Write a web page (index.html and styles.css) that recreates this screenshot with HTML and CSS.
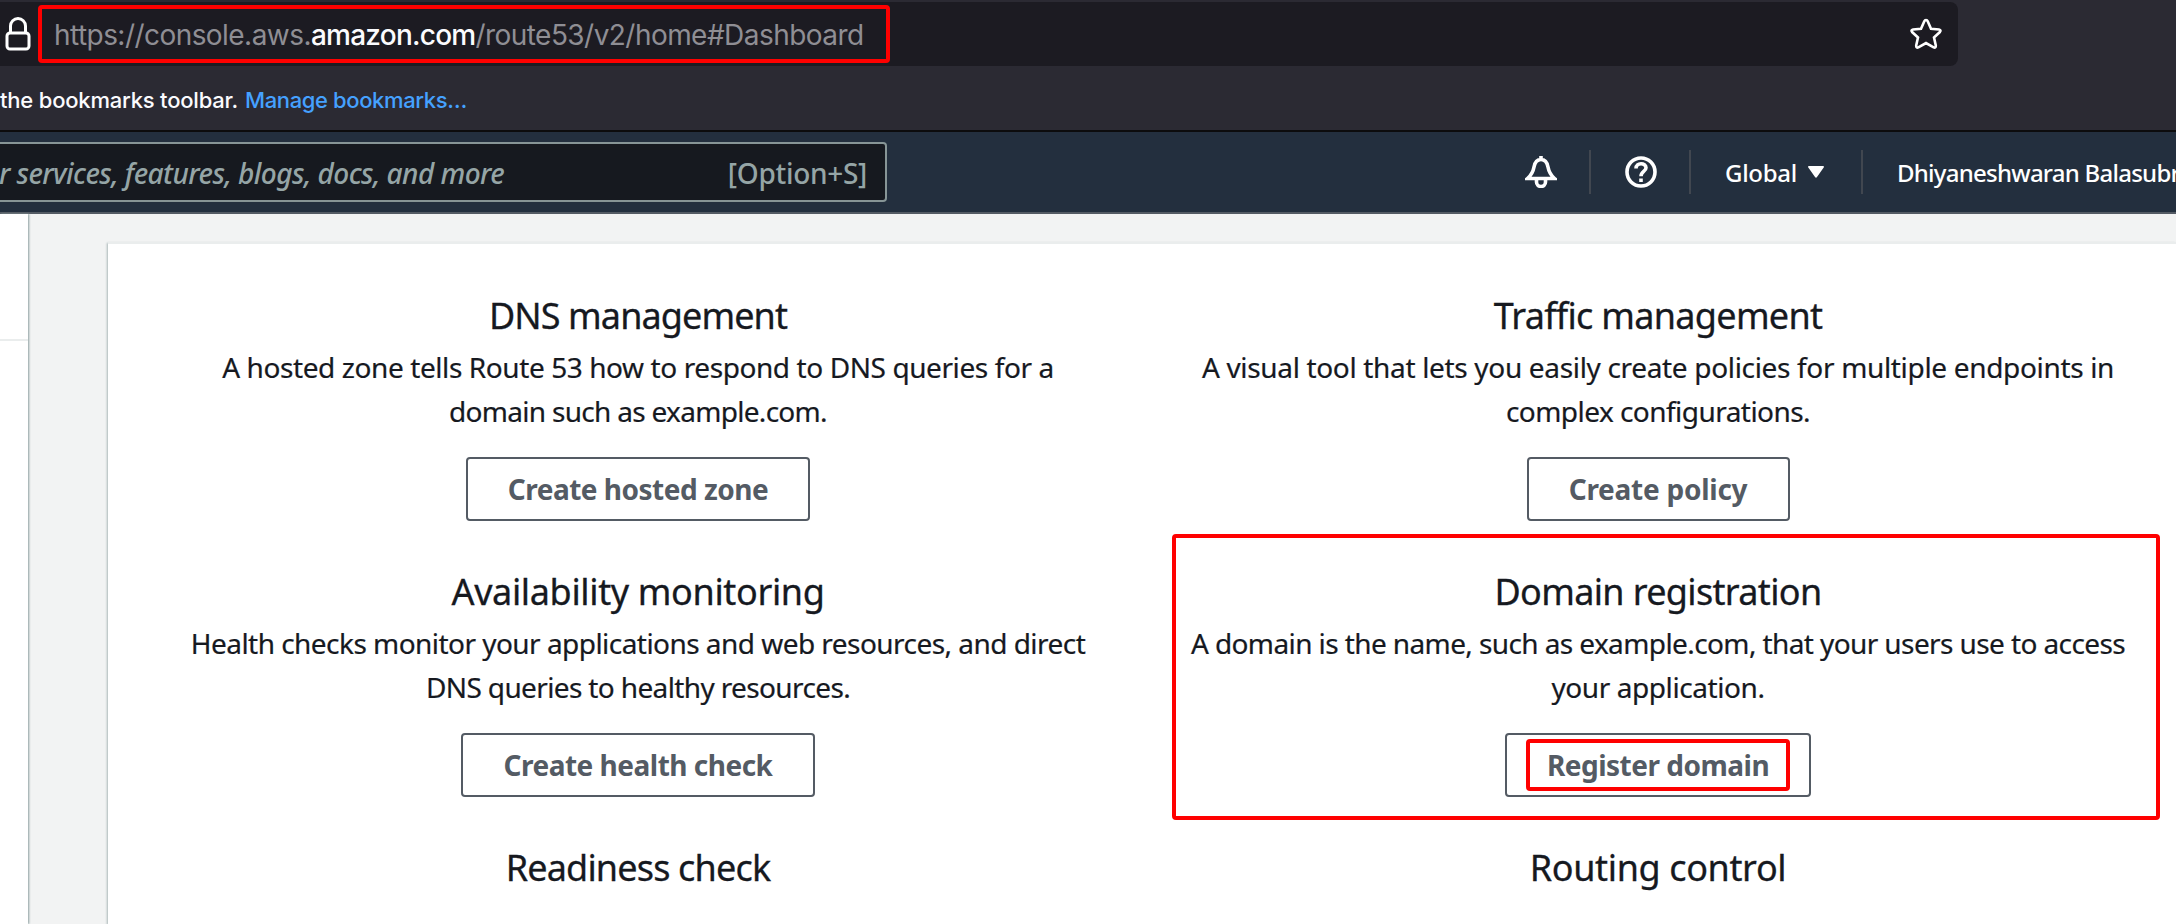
FILE: index.html
```html
<!DOCTYPE html>
<html lang="en">
<head>
<meta charset="utf-8">
<title>Route 53 Dashboard</title>
<link rel="stylesheet" href="styles.css">
</head>
<body>
<header class="browser">
  <div class="urlbar">
    <svg class="lock" width="26" height="34" viewBox="0 0 26 34"><path d="M5.500 15V9a7.500 7.500 0 0 1 15 0v6" /><rect x="2" y="16" width="22" height="16" rx="3"/></svg>
    <div class="url">https://console.aws.<b>amazon.com</b>/route53/v2/home#Dashboard</div>
    <svg class="star" width="34" height="34" viewBox="0 0 34 34"><path d="M17 3q1.200 0 1.700 1.200L22 11.700l8 .8q2.500.5.9 2.500L25 20.500l1.800 8q.2 2.800-2.200 1.900L17 26l-7.600 4.400q-2.400.9-2.200-1.900l1.800-8L3.100 15q-1.600-2 .9-2.500l8-.8 3.300-7.500Q15.800 3 17 3z"/></svg>
  </div>
  <div class="bookmarks"><span class="note">the bookmarks toolbar.</span><a class="manage">Manage bookmarks…</a></div>
</header>
<nav class="awsnav">
  <div class="search"><span class="hint">r services, features, blogs, docs, and more</span><span class="key">[Option+S]</span></div>
  <div class="tools">
    <div class="tool bell"><svg width="32" height="32" viewBox="0 0 32 32"><path d="M16 3V0M2.500 22.500C7 18.500 8.300 15 9 11c1-5.500 3.500-7.500 7-7.500s6 2 7 7.500c.7 4 2 7.500 6.500 11.500zM11.500 23v3a4.500 4.500 0 0 0 9 0v-3"/></svg></div>
    <div class="tool help"><svg width="32" height="32" viewBox="0 0 32 32"><circle cx="16" cy="16" r="14"/><path d="M11 12.500c0-6.500 10-6 10-.8 0 4-5 3.500-5 8.500M16 22.500v3.500"/></svg></div>
    <div class="tool region"><span class="rname">Global</span><svg width="16" height="12" viewBox="0 0 16 12"><path d="M1 0h14q1.500 0 .7 1.500L9 11q-1 1.500-2 0L.3 1.500Q-.5 0 1 0z"/></svg></div>
    <div class="tool user"><span class="uname">Dhiyaneshwaran Balasubr</span></div>
  </div>
</nav>
<main class="page">
  <aside class="side"><div class="sidehead"></div></aside>
  <section class="card">
    <article class="item"><h2 class="t1">DNS management</h2><p><span class="p1">A hosted zone tells Route 53 how to respond to DNS queries for a</span><br><span class="p2">domain such as example.com.</span></p><button class="w1"><span class="b1">Create hosted zone</span></button></article>
    <article class="item"><h2 class="t2">Traffic management</h2><p><span class="p3">A visual tool that lets you easily create policies for multiple endpoints in</span><br><span class="p4">complex configurations.</span></p><button class="w2"><span class="b2">Create policy</span></button></article>
    <article class="item"><h2 class="t3">Availability monitoring</h2><p><span class="p5">Health checks monitor your applications and web resources, and direct</span><br><span class="p6">DNS queries to healthy resources.</span></p><button class="w3"><span class="b3">Create health check</span></button></article>
    <article class="item marked"><h2 class="t4">Domain registration</h2><p><span class="p7">A domain is the name, such as example.com, that your users use to access</span><br><span class="p8">your application.</span></p><button class="w4"><span class="b4">Register domain</span></button></article>
    <article class="item"><h2 class="t5">Readiness check</h2></article>
    <article class="item"><h2 class="t6">Routing control</h2></article>
  </section>
</main>
</body>
</html>
```
FILE: styles.css
```css
*, ::before, ::after { box-sizing: border-box; }
body { margin: 0; width: 2176px; height: 924px; overflow: hidden; display: flex; flex-direction: column; background: #f2f3f3; font-family: "Noto Sans", sans-serif; color: #16191f; }
span, h2 { white-space: nowrap; }
svg { flex: none; fill: none; stroke: #fff; }

.browser { height: 132px; padding-top: 2px; background: #2b2a33; border-bottom: 2px solid #0c0c0d; font-family: Inter, sans-serif; flex: none; }
.urlbar { position: relative; display: flex; align-items: center; width: 1958px; height: 64px; padding-left: 5px; background: #1c1b22; border-radius: 0 8px 8px 0; }
.lock { stroke-width: 3; }
.url { margin-left: 7px; width: 852px; height: 58px; padding-left: 12px; line-height: 53px; border: 4px solid #f00; border-radius: 4px; color: #8f8e94; font-size: 28px; letter-spacing: -0.55px; white-space: nowrap; }
.url b { font-weight: 500; letter-spacing: -0.75px; color: #fbfbfe; }
.star { margin-left: auto; margin-right: 15px; stroke-width: 2.600; }
.bookmarks { display: flex; gap: 7px; height: 64px; line-height: 68px; font-size: 22px; font-weight: 500; letter-spacing: -0.26px; color: #fbfbfe; }
.note { letter-spacing: -0.2px; }
.manage { color: #45a1ff; letter-spacing: -0.38px; white-space: nowrap; }

.awsnav { flex: none; height: 82px; display: flex; justify-content: space-between; align-items: center; background: #232f3e; border-bottom: 2px solid #545b64; }
.search { display: flex; justify-content: space-between; align-items: center; width: 887px; height: 60px; padding-right: 18px; background: #16191f; border: 2px solid #879596; border-left: 0; border-radius: 0 4px 4px 0; color: #95a5a6; font-size: 28px; font-weight: 500; }
.search span { position: relative; top: 1px; }
.hint { font-style: italic; font-weight: 500; letter-spacing: -0.55px; margin-left: -1px; }
.key { letter-spacing: -0.3px; }
.tools { display: flex; align-items: center; width: 677px; color: #fff; font-size: 24px; font-weight: 500; }
.tool { display: flex; align-items: center; height: 44px; border-left: 2px solid #414750; flex: none; }
.bell { width: 90px; padding-left: 26px; border: 0; }
.help { width: 100px; padding-left: 34px; }
.tool svg { stroke-width: 3.600; }
.region { width: 172px; padding-left: 34px; gap: 11px; }
.rname { letter-spacing: -0.3px; }
.region svg { fill: #fff; stroke: none; }
.user { padding-left: 34px; width: 315px; }
.uname { letter-spacing: -0.75px; }

.page { flex: 1; display: flex; min-height: 0; }
.side { width: 28px; background: #fff; box-shadow: 1px 0 2px #8b9fa0; flex: none; }
.sidehead { height: 127px; border-bottom: 2px solid #eaeded; }
.card { margin: 28px 0 0 80px; padding: 44px 0 0 20px; width: 2068px; height: 682px; overflow: hidden; background: #fff; border-top: 2px solid #eaeded; box-shadow: -1px 1px 2px #aab7b8; display: grid; grid-template-columns: 1020px 1020px; grid-template-rows: 276px 276px 80px; align-content: start; flex: none; }
.item { display: flex; flex-direction: column; align-items: center; position: relative; }
h2 { margin: 0; font-size: 36px; line-height: 56px; font-weight: 400; -webkit-text-stroke: 0.3px #16191f; }
p { margin: 0; position: relative; top: 1px; font-size: 28px; line-height: 44px; text-align: center; -webkit-text-stroke: 0.2px #16191f; }
button { margin-top: 25px; height: 64px; padding: 0; background: #fff; border: 2px solid #545b64; border-radius: 4px; color: #545b64; font: 700 28px/60px "Noto Sans", sans-serif; letter-spacing: -0.5px; position: relative; }
.t1 { letter-spacing: -0.9px; } .t2 { letter-spacing: -0.7px; } .t3 { letter-spacing: -0.36px; }
.t4 { letter-spacing: -0.66px; } .t5 { letter-spacing: -0.83px; } .t6 { letter-spacing: -0.37px; }
.p1 { letter-spacing: -0.41px; } .p2 { letter-spacing: -0.7px; } .p3 { letter-spacing: -0.33px; } .p4 { letter-spacing: -0.54px; }
.p5 { letter-spacing: -0.54px; } .p6 { letter-spacing: -0.63px; } .p7 { letter-spacing: -0.6px; } .p8 { letter-spacing: -0.41px; }
.b2 { letter-spacing: -0.25px; }
.w1 { width: 344px; } .w2 { width: 263px; } .w3 { width: 354px; } .w4 { width: 306px; }
.marked::before { content: ""; position: absolute; left: 24px; top: -30px; width: 988px; height: 286px; border: 4px solid #f00; border-radius: 4px; }
.w4::after { content: ""; position: absolute; inset: 4px 19px; border: 4px solid #f00; border-radius: 4px; }
```
